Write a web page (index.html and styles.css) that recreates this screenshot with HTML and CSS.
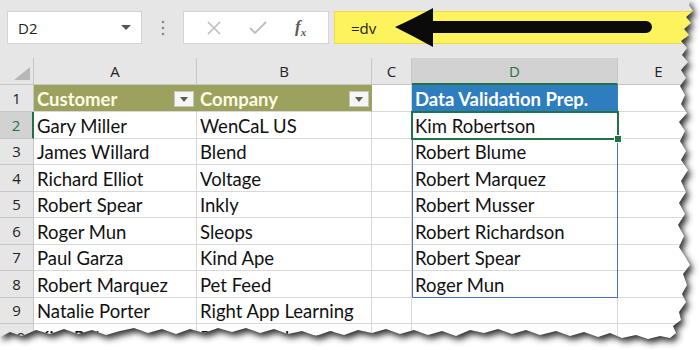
FILE: index.html
```html
<!DOCTYPE html>
<html lang="en">
<head>
    <meta charset="UTF-8">
    <title>Data Validation Prep</title>
    <link rel="stylesheet" href="styles.css">
</head>
<body>

<div class="sheet">
    <!-- formula bar strip -->
    <div class="toolbar">
        <div class="namebox">
            <span>D2</span>
            <svg class="caret" width="10" height="6" viewBox="0 0 10 6"><path d="M0 0 L10 0 L5 5 Z" fill="#555"/></svg>
        </div>
        <div class="grip">
            <svg width="4" height="16" viewBox="0 0 4 16"><circle cx="2" cy="2" r="1.3" fill="#888"/><circle cx="2" cy="8" r="1.3" fill="#888"/><circle cx="2" cy="14" r="1.3" fill="#888"/></svg>
        </div>
        <div class="fxbuttons">
            <svg width="16" height="16" viewBox="0 0 16 16"><path d="M2 2 L14 14 M14 2 L2 14" stroke="#bdbdbd" stroke-width="1.6" fill="none"/></svg>
            <svg width="18" height="16" viewBox="0 0 18 16"><path d="M1 8 L6 13 L17 2" stroke="#bdbdbd" stroke-width="1.8" fill="none"/></svg>
            <span class="fx">f<sub>x</sub></span>
        </div>
        <div class="formula">=dv</div>
    </div>

    <!-- worksheet -->
    <div class="grid">
        <div class="corner"><svg width="16" height="13" viewBox="0 0 16 13"><path d="M16 0 L16 13 L0 13 Z" fill="#b7b7b7"/></svg></div>
        <div class="colhead">A</div>
        <div class="colhead">B</div>
        <div class="colhead">C</div>
        <div class="colhead active">D</div>
        <div class="colhead">E</div>

        <div class="rowhead">1</div>
        <div class="cell th olive">Customer<span class="filter"></span></div>
        <div class="cell th olive">Company<span class="filter"></span></div>
        <div class="cell"></div>
        <div class="cell th blue">Data Validation Prep.</div>
        <div class="cell"></div>

        <div class="rowhead active">2</div>
        <div class="cell">Gary Miller</div>
        <div class="cell">WenCaL US</div>
        <div class="cell"></div>
        <div class="cell">Kim Robertson</div>
        <div class="cell"></div>

        <div class="rowhead">3</div>
        <div class="cell">James Willard</div>
        <div class="cell">Blend</div>
        <div class="cell"></div>
        <div class="cell">Robert Blume</div>
        <div class="cell"></div>

        <div class="rowhead">4</div>
        <div class="cell">Richard Elliot</div>
        <div class="cell">Voltage</div>
        <div class="cell"></div>
        <div class="cell">Robert Marquez</div>
        <div class="cell"></div>

        <div class="rowhead">5</div>
        <div class="cell">Robert Spear</div>
        <div class="cell">Inkly</div>
        <div class="cell"></div>
        <div class="cell">Robert Musser</div>
        <div class="cell"></div>

        <div class="rowhead">6</div>
        <div class="cell">Roger Mun</div>
        <div class="cell">Sleops</div>
        <div class="cell"></div>
        <div class="cell">Robert Richardson</div>
        <div class="cell"></div>

        <div class="rowhead">7</div>
        <div class="cell">Paul Garza</div>
        <div class="cell">Kind Ape</div>
        <div class="cell"></div>
        <div class="cell">Robert Spear</div>
        <div class="cell"></div>

        <div class="rowhead">8</div>
        <div class="cell">Robert Marquez</div>
        <div class="cell">Pet Feed</div>
        <div class="cell"></div>
        <div class="cell">Roger Mun</div>
        <div class="cell"></div>

        <div class="rowhead">9</div>
        <div class="cell">Natalie Porter</div>
        <div class="cell">Right App Learning</div>
        <div class="cell"></div>
        <div class="cell"></div>
        <div class="cell"></div>

        <div class="rowhead">10</div>
        <div class="cell">Kim Robertson</div>
        <div class="cell">Right App Learning</div>
        <div class="cell"></div>
        <div class="cell"></div>
        <div class="cell"></div>

        <!-- selection overlays -->
        <div class="range"></div>
        <div class="selected"><span class="handle"></span></div>
    </div>

    <!-- annotation arrow -->
    <svg class="arrow" width="700" height="60" viewBox="0 0 700 60">
        <path d="M395 27 Q413 19 433 8 L433 21 L646 21 A6 6 0 0 1 646 33 L433 33 L433 47 Q413 36 395 27 Z" fill="#0b0b0b"/>
    </svg>

    <!-- torn paper edge -->
    <svg class="torn" width="700" height="350" viewBox="0 0 700 350">
        <defs>
            <clipPath id="outside">
                <path clip-rule="evenodd" d="M0 0 H700 V350 H0 Z M0 0 L690 0 L689 5 L693 11 L686 17 L691 23 L684 29 L689 35 L681 41 L687 48 L682 55 L688 62 L681 70 L686 78 L680 86 L685 95 L681 104 L687 113 L679 122 L685 131 L680 141 L686 151 L681 160 L688 170 L681 181 L686 192 L679 203 L685 214 L678 225 L684 236 L679 247 L686 258 L690 265 L683 274 L687 285 L682 294 L686 302 L679 312 L681 320 L673 326 L676 333 L670 338 L660 336 L648 339 L636 335 L622 338 L610 333 L598 337 L584 332 L570 336 L556 331 L540 335 L526 330 L512 334 L498 329 L484 333 L470 330 L456 336 L442 331 L428 335 L414 330 L400 334 L386 329 L372 333 L358 330 L344 335 L330 331 L316 336 L302 331 L288 334 L274 329 L260 333 L246 328 L232 332 L218 328 L204 333 L190 329 L176 334 L162 329 L148 333 L134 328 L120 331 L106 335 L92 330 L78 334 L64 329 L50 334 L36 330 L22 336 L10 332 L0 337 Z"/>
            </clipPath>
            <filter id="blur" x="-5%" y="-5%" width="110%" height="110%">
                <feGaussianBlur stdDeviation="3"/>
            </filter>
        </defs>
        <g clip-path="url(#outside)">
            <rect width="700" height="350" fill="#fff"/>
            <path filter="url(#blur)" fill="#333" transform="translate(3 4)" d="M0 0 L690 0 L689 5 L693 11 L686 17 L691 23 L684 29 L689 35 L681 41 L687 48 L682 55 L688 62 L681 70 L686 78 L680 86 L685 95 L681 104 L687 113 L679 122 L685 131 L680 141 L686 151 L681 160 L688 170 L681 181 L686 192 L679 203 L685 214 L678 225 L684 236 L679 247 L686 258 L690 265 L683 274 L687 285 L682 294 L686 302 L679 312 L681 320 L673 326 L676 333 L670 338 L660 336 L648 339 L636 335 L622 338 L610 333 L598 337 L584 332 L570 336 L556 331 L540 335 L526 330 L512 334 L498 329 L484 333 L470 330 L456 336 L442 331 L428 335 L414 330 L400 334 L386 329 L372 333 L358 330 L344 335 L330 331 L316 336 L302 331 L288 334 L274 329 L260 333 L246 328 L232 332 L218 328 L204 333 L190 329 L176 334 L162 329 L148 333 L134 328 L120 331 L106 335 L92 330 L78 334 L64 329 L50 334 L36 330 L22 336 L10 332 L0 337 Z"/>
        </g>
    </svg>
</div>

</body>
</html>
```

FILE: styles.css
```css
/* Colors */
:root {
    --ui-gray: #e6e6e6;
    --grid-line: #d9d9d9;
    --head-line: #c6c6c6;
    --excel-green: #217346;
    --olive: #9ca15d;
    --blue: #2e7dbf;
    --range-blue: #4472c4;
    --yellow: #fdf35c;
}

body {
    margin: 0;
    background: #fff;
}

.sheet {
    position: relative;
    width: 700px;
    height: 350px;
    overflow: hidden;
    background: var(--ui-gray);
    font-family: 'Lato', 'Liberation Sans', sans-serif;
    color: #111;
}

/* Formula bar */
.toolbar {
    display: flex;
    align-items: stretch;
    height: 33px;
    padding: 11px 0 14px 7px;
}

.namebox {
    width: 135px;
    display: flex;
    align-items: center;
    justify-content: space-between;
    padding: 0 10px;
    box-sizing: border-box;
    background: #fff;
    border: 1px solid #d4d4d4;
    font-family: 'Open Sans', sans-serif;
    font-size: 15px;
    color: #222;
}

.grip {
    width: 41px;
    display: flex;
    align-items: center;
    justify-content: center;
}

.fxbuttons {
    width: 146px;
    display: flex;
    align-items: center;
    justify-content: space-around;
    padding: 0 8px;
    box-sizing: border-box;
    background: #fff;
    border: 1px solid #d4d4d4;
}

.fx {
    font-family: 'Liberation Serif', serif;
    font-style: italic;
    font-weight: bold;
    font-size: 17px;
    color: #5a5a5a;
}

.fx sub {
    font-size: 11px;
}

.formula {
    flex: 1;
    margin-left: 5px;
    display: flex;
    align-items: center;
    padding-left: 16px;
    background: var(--yellow);
    border: 1px solid #e8dc4a;
    font-family: 'Open Sans', sans-serif;
    font-size: 15px;
    color: #222;
}

/* Worksheet grid */
.grid {
    position: relative;
    display: grid;
    grid-template-columns: 34px 163px 175px 40px 206px 82px;
    grid-template-rows: 27px 27px repeat(9, 26.5px);
    background: #fff;
}

.corner,
.colhead,
.rowhead {
    background: var(--ui-gray);
    border-right: 1px solid var(--head-line);
    border-bottom: 1px solid var(--head-line);
    box-sizing: border-box;
    display: flex;
    align-items: center;
    justify-content: center;
    font-family: 'Open Sans', sans-serif;
    font-size: 15px;
    color: #222;
}

.corner {
    align-items: flex-end;
    justify-content: flex-end;
    padding: 0 3px 4px 0;
}

.colhead.active {
    background: #d2d2d2;
    color: var(--excel-green);
    border-bottom: 2px solid var(--excel-green);
}

.rowhead.active {
    background: #d2d2d2;
    color: var(--excel-green);
    border-right: 2px solid var(--excel-green);
}

.cell {
    border-right: 1px solid var(--grid-line);
    border-bottom: 1px solid var(--grid-line);
    box-sizing: border-box;
    display: flex;
    align-items: center;
    padding: 2px 3px 0;
    font-size: 18.5px;
    white-space: nowrap;
    overflow: visible;
}

.th {
    font-weight: bold;
    color: #fff;
}

.olive {
    background: var(--olive);
    color: #fdfbe4;
    justify-content: space-between;
    border-right-color: var(--olive);
    padding-right: 2px;
}

.blue {
    background: var(--blue);
    border-right-color: var(--blue);
}

.filter {
    position: relative;
    width: 20px;
    height: 16px;
    background: #f6f6f6;
    border: 1px solid #c4c4c4;
    box-sizing: border-box;
}

.filter::after {
    content: "";
    position: absolute;
    left: 5px;
    top: 5px;
    border-left: 4px solid transparent;
    border-right: 4px solid transparent;
    border-top: 5px solid #5b5b5b;
}

/* Selection overlays */
.range {
    position: absolute;
    left: 412px;
    top: 54px;
    width: 206px;
    height: 186px;
    border: 1px solid var(--range-blue);
    border-top: none;
    box-sizing: border-box;
}

.selected {
    position: absolute;
    left: 411px;
    top: 53px;
    width: 208px;
    height: 29px;
    border: 2px solid var(--excel-green);
    box-sizing: border-box;
}

.handle {
    position: absolute;
    right: -5px;
    bottom: -5px;
    width: 6px;
    height: 6px;
    background: var(--excel-green);
    border: 1px solid #fff;
}

.arrow {
    position: absolute;
    left: 0;
    top: 0;
}

.torn {
    position: absolute;
    left: 0;
    top: 0;
}
```
